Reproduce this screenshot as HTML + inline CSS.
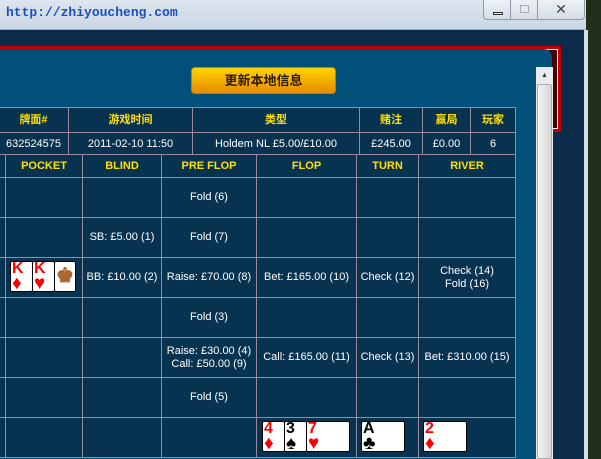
<!DOCTYPE html>
<html><head><meta charset="utf-8"><style>
*{margin:0;padding:0;box-sizing:border-box}
body{width:601px;height:459px;overflow:hidden;position:relative;background:#1f2f1a;font-family:"Liberation Sans","Noto Sans CJK SC",sans-serif;font-size:11px;color:#fff}
.abs{position:absolute}
.title{left:0;top:0;width:586px;height:30px;background:linear-gradient(#dde6ef,#c9d6e3);border-bottom:1px solid #aab}
.url{left:6px;top:5px;color:#1a4fc8;font-weight:bold;font-size:13px;font-family:"Liberation Mono",monospace}
.wb{top:0;height:20px;border:1px solid #8e9aa8;border-top:none;background:linear-gradient(#eef2f6,#d4dce6)}
.navy{left:0;top:30px;width:584px;height:429px;background:#0c2a4a}
.frame{left:584px;top:30px;width:4px;height:429px;background:#d6dde6}
.red{left:0;top:46px;width:561px;height:86px;background:#c00000}
.redi{left:0;top:49px;width:558px;height:80px;background:#4a0000;border:1px solid #fff;border-left:none}
.panel{left:0;top:49px;width:552px;height:410px;background:#005079;border-top-right-radius:8px}
.btn{left:191px;top:67px;width:145px;height:27px;border-radius:4px;background:linear-gradient(#ffd200,#f3a800 60%,#e68a00);border:1px solid #c97a00;color:#2a1a00;font-weight:bold;font-size:13px;text-align:center;line-height:25px}
.sb{left:536px;top:67px;width:17px;height:392px;background:#e9ecef}
.th{left:537px;top:84px;width:15px;height:375px;border:1px solid #aaa;border-radius:2px;background:linear-gradient(90deg,#f4f4f4,#d6d6d6)}
table{position:absolute;border-collapse:collapse;background:#083350}
td{border:1px solid #9a8aa0;text-align:center;color:#fff;font-size:11px;line-height:13px}
.h td{color:#ffe000;font-weight:bold}
.card{position:absolute;width:23px;height:31px;background:#fff;border:1px solid #000;border-radius:2px;font-weight:bold;font-size:16px;line-height:14px;padding-left:1px}
.r{color:#f00}.k{color:#000}
.card span{display:block;font-size:19px;line-height:16px}
</style></head><body>
<div class="abs title"></div>
<div class="abs url">http://zhiyoucheng.com</div>
<div class="abs wb" style="left:483px;width:28px;border-bottom-left-radius:4px"><div class="abs" style="left:9px;top:12px;width:10px;height:3px;border:1px solid #333"></div></div>
<div class="abs wb" style="left:510px;width:28px"><div class="abs" style="left:9px;top:5px;width:9px;height:8px;border:1px solid #aab"></div></div>
<div class="abs wb" style="left:537px;width:48px;border-bottom-right-radius:4px;text-align:center;color:#444;font-size:14px;line-height:18px">✕</div>
<div class="abs navy"></div>
<div class="abs frame"></div>
<div class="abs red"></div>
<div class="abs redi"></div>
<div class="abs panel"></div>
<div class="abs btn">更新本地信息</div>
<div class="abs sb"><div style="text-align:center;font-size:7px;color:#333;margin-top:5px">▲</div></div>
<div class="abs th"></div>
<table style="left:-2px;top:107px;width:518px">
<tr class="h" style="height:25px"><td style="width:70px">牌面#</td><td style="width:124px">游戏时间</td><td style="width:167px">类型</td><td style="width:63px">赌注</td><td style="width:48px">赢局</td><td>玩家</td></tr>
<tr style="height:23px"><td>632524575</td><td>2011-02-10 11:50</td><td>Holdem NL £5.00/£10.00</td><td>£245.00</td><td>£0.00</td><td>6</td></tr>
</table>
<table style="left:-2px;top:154px;width:518px">
<tr class="h" style="height:23px"><td style="width:7px"></td><td style="width:77px">POCKET</td><td style="width:79px">BLIND</td><td style="width:95px">PRE FLOP</td><td style="width:100px">FLOP</td><td style="width:62px">TURN</td><td>RIVER</td></tr>
<tr style="height:40px"><td></td><td></td><td></td><td>Fold (6)</td><td></td><td></td><td></td></tr>
<tr style="height:40px"><td></td><td></td><td>SB: £5.00 (1)</td><td>Fold (7)</td><td></td><td></td><td></td></tr>
<tr style="height:40px"><td></td><td></td><td>BB: £10.00 (2)</td><td>Raise: £70.00 (8)</td><td>Bet: £165.00 (10)</td><td>Check (12)</td><td>Check (14)<br>Fold (16)</td></tr>
<tr style="height:40px"><td></td><td></td><td></td><td>Fold (3)</td><td></td><td></td><td></td></tr>
<tr style="height:40px"><td></td><td></td><td></td><td>Raise: £30.00 (4)<br>Call: £50.00 (9)</td><td>Call: £165.00 (11)</td><td>Check (13)</td><td>Bet: £310.00 (15)</td></tr>
<tr style="height:40px"><td></td><td></td><td></td><td>Fold (5)</td><td></td><td></td><td></td></tr>
<tr style="height:40px"><td></td><td></td><td></td><td></td><td></td><td></td><td></td></tr>
</table>
<div class="card r" style="left:10px;top:261px">K<span>♦</span></div>
<div class="card r" style="left:32px;top:261px">K<span>♥</span></div>
<div class="card k" style="left:54px;top:261px;width:22px;font-size:20px;line-height:28px;text-align:center;padding:0;color:#a63">♚</div>
<div class="card r" style="left:262px;top:421px">4<span>♦</span></div>
<div class="card k" style="left:284px;top:421px">3<span>♠</span></div>
<div class="card r" style="left:306px;top:421px;width:44px">7<span>♥</span></div>
<div class="card k" style="left:361px;top:421px;width:44px">A<span>♣</span></div>
<div class="card r" style="left:423px;top:421px;width:44px">2<span>♦</span></div>
</body></html>
